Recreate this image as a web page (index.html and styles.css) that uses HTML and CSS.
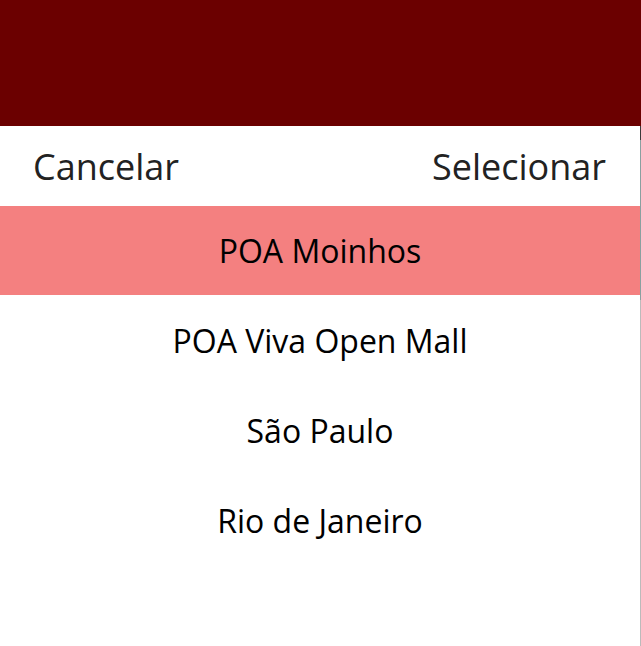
FILE: index.html
```html
<!DOCTYPE html>
<html lang="pt">
<head>
<meta charset="utf-8">
<link rel="stylesheet" href="styles.css">
</head>
<body>
<div class="page">
  <div class="picker">
    <div class="header"></div>
    <div class="toolbar">
      <span class="btn">Cancelar</span>
      <span class="btn">Selecionar</span>
    </div>
    <ul class="list">
      <li class="item selected">POA Moinhos</li>
      <li class="item">POA Viva Open Mall</li>
      <li class="item">São Paulo</li>
      <li class="item">Rio de Janeiro</li>
    </ul>
  </div>
  <div class="edge"></div>
</div>
</body>
</html>
```
FILE: styles.css
```css
* { box-sizing: border-box; }
html, body { margin: 0; padding: 0; background: #ffffff; }
body { font-family: "Open Sans", "Noto Sans", sans-serif; }
.page { display: flex; width: 641px; height: 646px; overflow: hidden; }
.picker { width: 640px; flex: none; background: #fff; }
.edge { width: 1px; flex: none; background: linear-gradient(#6b0000 0 126px, #3a3a3a 126px 140px, #8aa0a0 140px 300px, #bbbbbb 300px); }
.header { height: 126px; background: #6b0000; }
.toolbar { height: 80px; display: flex; justify-content: space-between; align-items: center; padding: 0 34px 0 33px; }
.btn { font-size: 36px; color: #222222; }
.list { list-style: none; margin: 0; padding: 0; }
.item { height: 90px; display: flex; align-items: center; justify-content: center; font-size: 32px; color: #000000; }
.selected { background: #f48080; height: 89px; }
```
